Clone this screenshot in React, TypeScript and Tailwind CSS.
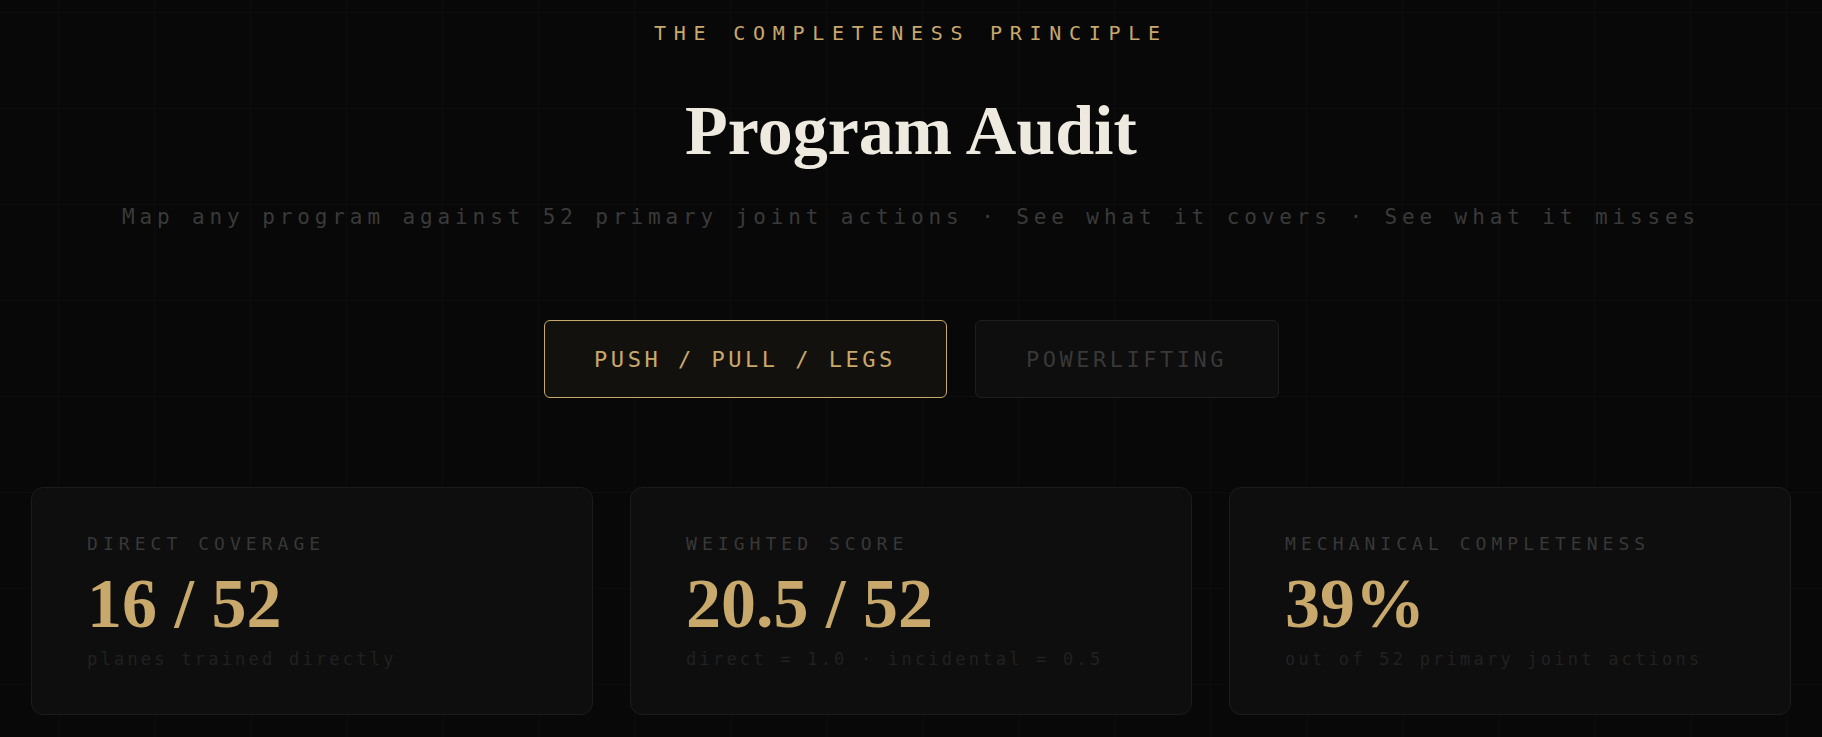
const mono = "font-['DejaVu_Sans_Mono','Liberation_Mono',monospace]";
const serif = "font-['Liberation_Serif','DejaVu_Serif',serif]";

type Stat = { label: string; value: string; note: string };

const stats: Stat[] = [
  { label: "DIRECT COVERAGE", value: "16 / 52", note: "planes trained directly" },
  { label: "WEIGHTED SCORE", value: "20.5 / 52", note: "direct = 1.0 · incidental = 0.5" },
  { label: "MECHANICAL COMPLETENESS", value: "39%", note: "out of 52 primary joint actions" },
];

function StatCard({ label, value, note }: Stat) {
  return (
    <div className="rounded-xl border border-[#1c1c1c] bg-[#0e0e0e] px-[55px] pt-[48px] pb-[47px]">
      <div className={`${mono} text-[18px] leading-[16px] tracking-[0.28em] text-[#383838]`}>{label}</div>
      <div className={`${serif} mt-[17px] text-[70px] leading-none font-bold text-[#c8a96b]`}>{value}</div>
      <div className={`${mono} mt-[13px] text-[17px] leading-[15px] tracking-[0.19em] text-[#212121]`}>{note}</div>
    </div>
  );
}

export default function App() {
  return (
    <div className="min-h-screen bg-[#080808] bg-[linear-gradient(to_right,rgba(255,255,255,0.018)_1px,transparent_1px),linear-gradient(to_bottom,rgba(255,255,255,0.018)_1px,transparent_1px)] bg-size-[96px_96px] bg-position-[58px_12px]">
      <div className="flex flex-col items-center pt-6">
        <div className={`${mono} text-[20px] leading-[18px] tracking-[0.386em] text-[#c8a96b]`}>
          THE COMPLETENESS PRINCIPLE
        </div>
        <h1 className={`${serif} mt-[54px] text-[70px] leading-none font-bold text-[#efeae0]`}>Program Audit</h1>
        <p className={`${mono} mt-[42px] text-[21px] leading-[18px] tracking-[0.233em] text-[#3a3a3a]`}>
          Map any program against 52 primary joint actions · See what it covers · See what it misses
        </p>

        <div className="mt-[94px] flex gap-[28px]">
          <button className={`${mono} h-[78px] w-[403px] rounded-md border-[1.5px] border-[#c8a96b] bg-[#13110d] text-[22px] tracking-[0.16em] text-[#c8a96b]`}>
            PUSH / PULL / LEGS
          </button>
          <button className={`${mono} h-[78px] w-[304px] rounded-md border-[1.5px] border-[#1e1e1e] bg-[#0e0e0e] text-[22px] tracking-[0.16em] text-[#383838]`}>
            POWERLIFTING
          </button>
        </div>
      </div>

      <div className="mt-[89px] grid grid-cols-3 gap-[37px] px-[31px] pb-10">
        {stats.map((s) => (
          <StatCard key={s.label} {...s} />
        ))}
      </div>
    </div>
  );
}
